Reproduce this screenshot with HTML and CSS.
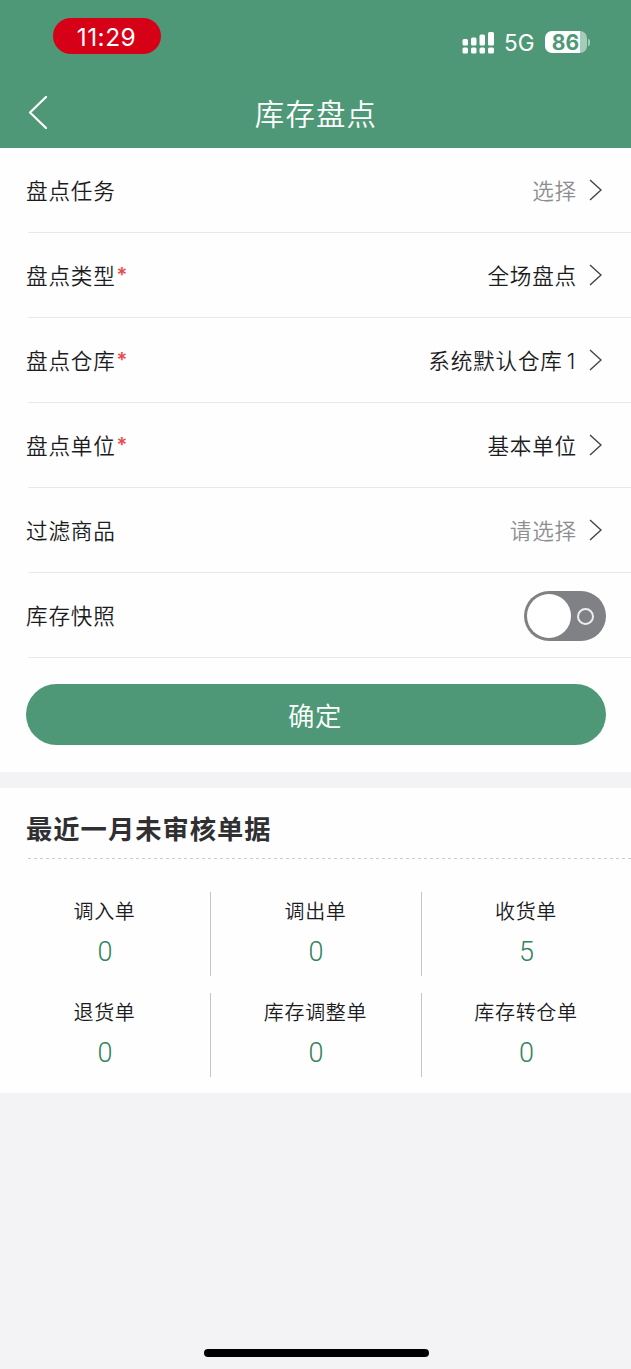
FILE: index.html
```html
<!DOCTYPE html>
<html lang="zh-CN">
<head>
  <meta charset="UTF-8">
  <meta name="viewport" content="width=device-width, initial-scale=1.0">
  <title>库存盘点</title>
  <link rel="stylesheet" href="styles.css">
</head>
<body>

  <header class="header">
    <div class="status-bar">
      <span class="time">11:29</span>
      <div class="status-right">
        <svg class="signal" width="33" height="23" viewBox="0 0 33 23" fill="#fff">
          <rect x="0.5" y="8" width="5.5" height="6.5" rx="1.5"/>
          <rect x="9" y="6.5" width="5.5" height="8" rx="1.5"/>
          <rect x="17.5" y="3.5" width="5.5" height="11" rx="1.5"/>
          <rect x="26" y="1" width="6" height="13.5" rx="1.5"/>
          <rect x="0.5" y="16.5" width="5.5" height="6" rx="1.5"/>
          <rect x="9" y="16.5" width="5.5" height="6" rx="1.5"/>
          <rect x="17.5" y="16.5" width="5.5" height="6" rx="1.5"/>
          <rect x="26" y="16.5" width="6" height="6" rx="1.5"/>
        </svg>
        <span class="network">5G</span>
        <span class="battery">86</span>
        <span class="battery-tip"></span>
      </div>
    </div>
    <div class="nav">
      <svg class="back" width="20" height="36" viewBox="0 0 20 36" fill="none" stroke="#fff" stroke-width="2.2" stroke-linecap="round" stroke-linejoin="round">
        <path d="M18 2 2 17.5l16 15.5"/>
      </svg>
      <h1>库存盘点</h1>
    </div>
  </header>

  <main>
    <section class="form">
      <div class="row">
        <span class="label">盘点任务</span>
        <span class="value empty">选择</span>
        <svg class="arrow" width="13" height="22" viewBox="0 0 13 22"><path d="M1 1l11 10L1 21"/></svg>
      </div>
      <div class="row">
        <span class="label">盘点类型<i>*</i></span>
        <span class="value">全场盘点</span>
        <svg class="arrow" width="13" height="22" viewBox="0 0 13 22"><path d="M1 1l11 10L1 21"/></svg>
      </div>
      <div class="row">
        <span class="label">盘点仓库<i>*</i></span>
        <span class="value">系统默认仓库<em>1</em></span>
        <svg class="arrow" width="13" height="22" viewBox="0 0 13 22"><path d="M1 1l11 10L1 21"/></svg>
      </div>
      <div class="row">
        <span class="label">盘点单位<i>*</i></span>
        <span class="value">基本单位</span>
        <svg class="arrow" width="13" height="22" viewBox="0 0 13 22"><path d="M1 1l11 10L1 21"/></svg>
      </div>
      <div class="row">
        <span class="label">过滤商品</span>
        <span class="value empty">请选择</span>
        <svg class="arrow" width="13" height="22" viewBox="0 0 13 22"><path d="M1 1l11 10L1 21"/></svg>
      </div>
      <div class="row">
        <span class="label">库存快照</span>
        <span class="switch"><span class="knob"></span><span class="ring"></span></span>
      </div>
      <button class="submit">确定</button>
    </section>

    <section class="pending">
      <h2>最近一月未审核单据</h2>
      <svg class="dashes" width="603" height="1"><line x1="0" y1="0.5" x2="603" y2="0.5"/></svg>
      <div class="grid">
        <div class="cell"><span>调入单</span><b>0</b></div>
        <div class="cell"><span>调出单</span><b>0</b></div>
        <div class="cell"><span>收货单</span><b>5</b></div>
        <div class="cell"><span>退货单</span><b>0</b></div>
        <div class="cell"><span>库存调整单</span><b>0</b></div>
        <div class="cell"><span>库存转仓单</span><b>0</b></div>
      </div>
    </section>
  </main>

  <div class="home-bar"></div>

</body>
</html>
```
FILE: styles.css
```css
* {
  box-sizing: border-box;
}

body {
  margin: 0;
  min-height: 1369px;
  display: flex;
  flex-direction: column;
  background-color: #f3f2f5;
  color: #1c1c1e;
  font-family: "Noto Sans CJK SC", sans-serif;
  font-weight: 350;
}

.header {
  height: 148px;
  background-color: #4f9877;
  color: #fff;
}

.status-bar {
  height: 78px;
  display: flex;
  justify-content: space-between;
  padding: 18px 41px 0 53px;
  font-family: Inter, sans-serif;
}

.time {
  width: 108px;
  height: 36px;
  padding-right: 1px;
  border-radius: 18px;
  background-color: #d60017;
  font-size: 24.5px;
  font-weight: 400;
  letter-spacing: 0.5px;
  line-height: 38px;
  text-align: center;
}

.status-right {
  display: flex;
  align-items: center;
  height: 24px;
  margin-top: 12px;
}

.network {
  width: 32px;
  margin-left: 9px;
  font-size: 22.5px;
  font-weight: 400;
  line-height: 24px;
  padding-top: 1px;
}

.battery {
  width: 42px;
  height: 22px;
  margin-left: 9px;
  padding-right: 1px;
  border-radius: 7px;
  background: linear-gradient(90deg, #fff 35px, #a5cbb9 35px);
  color: #4f9877;
  font-size: 21px;
  font-weight: 700;
  line-height: 23px;
  text-align: center;
}

.battery-tip {
  width: 2px;
  height: 7px;
  margin-left: 1px;
  border-radius: 0 3px 3px 0;
  background-color: #a5cbb9;
}

.nav {
  display: flex;
  align-items: center;
  height: 70px;
  padding: 0 28px;
}

h1 {
  flex: 1;
  margin: 0 19px 3px 0;
  font-size: 29.4px;
  font-weight: 350;
  letter-spacing: 1.2px;
  line-height: 44px;
  text-align: center;
}

.form {
  height: 624px;
  background-color: #fefefe;
}

.row {
  display: flex;
  align-items: center;
  height: 85px;
  margin-left: 28px;
  padding-right: 29px;
  border-bottom: 1px solid #e9e9ec;
  font-size: 21.6px;
  letter-spacing: 0.8px;
}

.label {
  flex: 1;
  margin-left: -2px;
}

.label i {
  margin-left: 1px;
  color: #ea4b4e;
  font-family: Inter, sans-serif;
  font-size: 20px;
  font-style: normal;
  font-weight: 600;
  line-height: 20px;
  vertical-align: 2px;
}

.value em {
  padding: 0 1px 0 4px;
  font-family: Inter, sans-serif;
  font-style: normal;
}

.label,
.value {
  padding-bottom: 1px;
}

.empty {
  color: #8e8e91;
}

.arrow {
  margin-left: 12px;
  fill: none;
  stroke: #444;
  stroke-width: 1.4;
}

.switch {
  display: flex;
  align-items: center;
  justify-content: space-between;
  width: 82px;
  height: 50px;
  margin: 1px -4px 0 0;
  padding: 0 12px 0 3px;
  border-radius: 25px;
  background-color: #808184;
}

.knob {
  width: 44px;
  height: 44px;
  border-radius: 50%;
  background-color: #fff;
}

.ring {
  width: 17px;
  height: 17px;
  margin-top: 1px;
  border: 2px solid #eee;
  border-radius: 50%;
}

.submit {
  display: block;
  width: 580px;
  height: 61px;
  margin: 26px 0 0 26px;
  padding: 0 2px 1px 0;
  border: none;
  border-radius: 31px;
  background-color: #4f9877;
  color: #fff;
  font-family: inherit;
  font-size: 26.4px;
  font-weight: 350;
  letter-spacing: 0.6px;
}

.pending {
  height: 305px;
  margin-top: 16px;
  padding-top: 20px;
  background-color: #fefefe;
}

h2 {
  height: 40px;
  margin: 0 0 10px 26px;
  color: #303033;
  font-size: 26.3px;
  font-weight: 700;
  letter-spacing: 1px;
  line-height: 40px;
}

.dashes {
  display: block;
  margin-left: 28px;
  stroke: #ccc;
  stroke-dasharray: 3 3;
}

.grid {
  display: grid;
  grid-template-columns: 211px 211px 209px;
  row-gap: 17px;
  margin-top: 33px;
}

.cell {
  display: flex;
  flex-direction: column;
  align-items: center;
  height: 84px;
  border-right: 1px solid #c4c4c7;
  font-size: 20px;
  letter-spacing: 0.7px;
}

.cell:nth-child(3n) {
  border-right: none;
}

.cell span {
  height: 39px;
  margin-right: 1px;
  line-height: 37px;
}

.cell b {
  color: #33835f;
  font-family: Roboto, sans-serif;
  font-size: 27px;
  font-weight: 350;
  letter-spacing: 0;
  line-height: 42px;
}

.home-bar {
  width: 225px;
  height: 8px;
  margin: auto auto 12px 204px;
  border-radius: 4px;
  background-color: #000;
}
```
